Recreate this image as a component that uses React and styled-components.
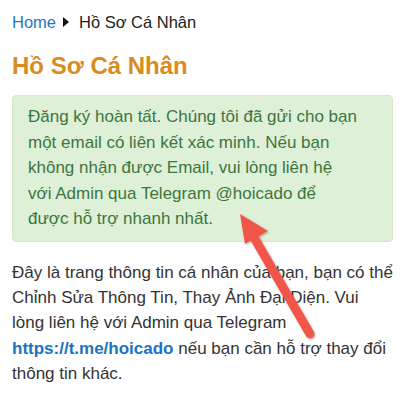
import React from 'react';
import styled, { createGlobalStyle } from 'styled-components';

const GlobalStyle = createGlobalStyle`
  html, body {
    margin: 0;
    padding: 0;
    background: #ffffff;
  }
  body {
    font-family: "Liberation Sans", Arial, Helvetica, sans-serif;
    color: #333333;
  }
`;

const Page = styled.div`
  position: relative;
  width: 410px;
  height: 400px;
  overflow: hidden;
  box-sizing: border-box;
  padding: 10px 17px 0 12px;
`;

const Breadcrumb = styled.div`
  display: flex;
  align-items: center;
  font-size: 16.5px;
  line-height: 24px;
  color: #222;
`;

const Crumb = styled.a`
  color: #1b78c8;
  text-decoration: none;
`;

const Caret = styled.span`
  width: 0;
  height: 0;
  margin: 0 10px 0 7px;
  border-top: 5px solid transparent;
  border-bottom: 5px solid transparent;
  border-left: 6px solid #111;
`;

const Title = styled.h1`
  margin: 17px 0 14px;
  font-size: 24px;
  line-height: 30px;
  font-weight: bold;
  color: #d98b20;
`;

const Alert = styled.div`
  box-sizing: border-box;
  padding: 8px 15px 9px;
  background: #dff0d8;
  border: 1px solid #d6e9c6;
  border-radius: 4px;
  color: #3c763d;
  font-size: 17px;
  line-height: 25.6px;
`;

const Body = styled.p`
  margin: 18px 0 0;
  font-size: 17px;
  line-height: 25.2px;
  color: #333;
`;

const Link = styled.a`
  color: #1a73c2;
  font-weight: bold;
  text-decoration: none;
`;

const ArrowLayer = styled.svg`
  position: absolute;
  left: 0;
  top: 0;
  pointer-events: none;
  overflow: visible;
`;

const Arrow = () => (
  <ArrowLayer width="410" height="400" viewBox="0 0 410 400">
    <defs>
      <filter id="sh" x="-20%" y="-20%" width="140%" height="140%">
        <feDropShadow dx="1" dy="1" stdDeviation="1.2" floodColor="#000" floodOpacity="0.3" />
      </filter>
    </defs>
    <g filter="url(#sh)" fill="#f2564a">
      <line x1="310" y1="334" x2="252" y2="234" stroke="#f2564a" strokeWidth="9" strokeLinecap="round" />
      <polygon points="240,214 245,244 268,231" />
    </g>
  </ArrowLayer>
);

export default function App() {
  return (
    <>
      <GlobalStyle />
      <Page>
        <Breadcrumb>
          <Crumb href="#">Home</Crumb>
          <Caret />
          <span>Hồ Sơ Cá Nhân</span>
        </Breadcrumb>
        <Title>Hồ Sơ Cá Nhân</Title>
        <Alert>
          Đăng ký hoàn tất. Chúng tôi đã gửi cho bạn<br />
          một email có liên kết xác minh. Nếu bạn<br />
          không nhận được Email, vui lòng liên hệ<br />
          với Admin qua Telegram @hoicado để<br />
          được hỗ trợ nhanh nhất.
        </Alert>
        <Body>
          Đây là trang thông tin cá nhân của bạn, bạn có thể Chỉnh Sửa Thông Tin, Thay Ảnh Đại
          Diện. Vui lòng liên hệ với Admin qua Telegram{' '}
          <Link href="#">https://t.me/hoicado</Link> nếu bạn cần hỗ trợ thay đổi thông tin
          khác.
        </Body>
        <Arrow />
      </Page>
    </>
  );
}
